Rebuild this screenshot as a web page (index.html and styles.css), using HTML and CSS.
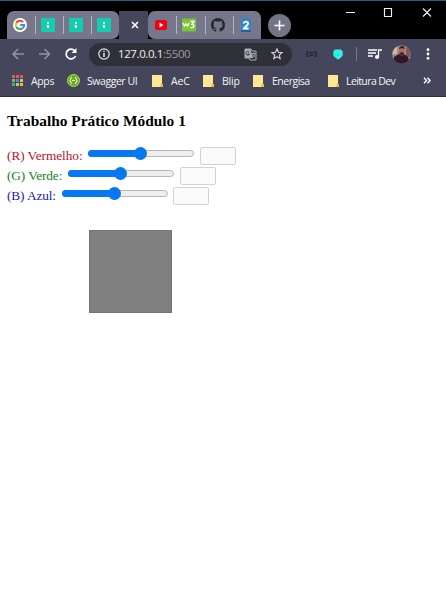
FILE: index.html
```
<!DOCTYPE html>
<html lang="pt-BR">
<head>
<meta charset="utf-8">
<title>Trabalho Prático Módulo 1</title>
<link rel="stylesheet" href="styles.css">
</head>
<body>
<header class="tabstrip">
  <div class="group first">
    <div class="tab"><svg width="14" height="14" viewBox="0 0 14 14"><circle cx="7" cy="7" r="7" fill="#fff"/><g fill="none" stroke-width="2"><path d="M3.3 5A4.2 4.2 0 0 1 10.1 4.1" stroke="#ea4335"/><path d="M3.3 5A4.2 4.2 0 0 0 3.3 9" stroke="#fbbc05"/><path d="M3.3 9A4.2 4.2 0 0 0 9.8 10.1" stroke="#34a853"/><path d="M9.8 10.1A4.2 4.2 0 0 0 11.2 7H7.2" stroke="#4285f4"/></g></svg></div>
    <div class="tab sep"><svg width="14" height="14" viewBox="0 0 14 14"><path fill="#12cdb0" d="M0 0h14v14H0z"/><path fill="#fff" d="M6 4h2v2H6zM5.5 7H8v3H6V8h-.5z"/></svg></div>
    <div class="tab sep"><svg width="14" height="14" viewBox="0 0 14 14"><path fill="#12cdb0" d="M0 0h14v14H0z"/><path fill="#fff" d="M6 4h2v2H6zM5.5 7H8v3H6V8h-.5z"/></svg></div>
    <div class="tab sep"><svg width="14" height="14" viewBox="0 0 14 14"><path fill="#12cdb0" d="M0 0h14v14H0z"/><path fill="#fff" d="M6 4h2v2H6zM5.5 7H8v3H6V8h-.5z"/></svg></div>
  </div>
  <div class="active"><svg width="8" height="8" viewBox="0 0 8 8"><path d="M1 1l6 6M7 1L1 7" stroke="#fff" stroke-width="1.6"/></svg></div>
  <div class="group second">
    <div class="tab"><svg width="14" height="14" viewBox="0 0 14 14"><rect x="1" y="2" width="12" height="10" rx="2.5" fill="#f00012"/><path d="M5.5 4.6v4.8L9.5 7z" fill="#fff"/></svg></div>
    <div class="tab sep"><svg width="14" height="14" viewBox="0 0 14 14"><rect y=".5" width="14" height="13" rx="1" fill="#77c834"/><path d="M1 5l1.5 3L4 6l1.500 2L7 5M8.500 3.500h3.500L10 6.300c3 0 2.500 4-1.500 3.200" fill="none" stroke="#fff" stroke-width="1.400"/></svg></div>
    <div class="tab sep"><svg width="14" height="14" viewBox="0 0 16 16"><path fill="#25292f" d="M8 0C3.580 0 0 3.580 0 8c0 3.540 2.290 6.530 5.470 7.590.4.070.55-.17.55-.38 0-.19-.01-.82-.01-1.490-2.010.37-2.530-.49-2.690-.94-.09-.23-.48-.94-.82-1.130-.28-.15-.68-.52-.01-.53.63-.01 1.080.58 1.230.82.72 1.210 1.870.87 2.330.66.07-.52.28-.87.51-1.070-1.780-.2-3.640-.89-3.640-3.950 0-.87.31-1.590.82-2.150-.08-.2-.36-1.020.08-2.120 0 0 .67-.21 2.200.82a7.600 7.600 0 0 1 4 0c1.530-1.040 2.200-.82 2.200-.82.44 1.100.16 1.920.08 2.120.51.56.82 1.270.82 2.150 0 3.070-1.870 3.750-3.650 3.950.29.25.54.73.54 1.480 0 1.070-.01 1.930-.01 2.200 0 .21.15.46.55.38A8 8 0 0 0 16 8c0-4.420-3.580-8-8-8z"/></svg></div>
    <div class="tab sep"><svg width="12" height="15" viewBox="0 0 12 15"><path fill="#3184cf" d="M1 0h8l2 3v11H1z"/><path d="M1 12h10v2H1z" fill="#23629e"/><path d="M3.500 5.500C4 3 8.300 3.200 8.100 5.600 8 7.500 5 8.500 4 10.500h4.600" fill="none" stroke="#fff" stroke-width="1.800"/></svg></div>
  </div>
  <div class="plus"><svg width="11" height="11" viewBox="0 0 11 11"><path d="M5.500.5v10M.5 5.500h10" stroke="#fff" stroke-width="1.600"/></svg></div>
  <svg class="window" width="88" height="12" viewBox="0 0 88 12"><path d="M1 6.500h9M39.500 2.500h7v8h-7zM78 2.500l8 8m0-8l-8 8" fill="none" stroke="#eee" stroke-width="1.150"/></svg>
</header>

<nav class="toolbar">
  <svg class="nav" width="68" height="14" viewBox="0 0 68 14" fill="none"><path d="M13 7H2M7 2L2 7l5 5M28 7h10.500M33.500 2l5 5-5 5" stroke="#94949f" stroke-width="1.500"/><path d="M63.600 3.600A4.900 4.900 0 1 0 64.500 9" stroke="#fff" stroke-width="1.700"/><path d="M65.500 1v5h-5z" fill="#fff"/></svg>
  <div class="address">
    <svg width="12" height="12" viewBox="0 0 12 12"><circle cx="6" cy="6" r="5.200" fill="none" stroke="#e6e6e8" stroke-width="1.200"/><path d="M6 5v4M6 2.700v1.400" stroke="#eee" stroke-width="1.400"/></svg>
    <span class="url">127.0.0.1<span class="port">:5500</span></span>
    <svg class="translate" width="13" height="13" viewBox="0 0 13 13"><path d="M1 1h6l1 2h4v9H6l-1-2H1z" fill="none" stroke="#a9aab0" stroke-width="1"/><path d="M1 1h5.500L9 10H1z" fill="#a9aab0"/><path d="M5 4.200a1.700 1.700 0 1 0 .4 1.800H4" fill="none" stroke="#35353e"/><path d="M7.800 5.500h3.700M9.700 4.500v1M11 5.500c-.3 1.700-1.500 2.900-2.500 3.700M8.500 6.500l2.500 3" fill="none" stroke="#c2c2c7" stroke-width=".8"/></svg>
    <svg width="12" height="12" viewBox="0 0 12 12"><path d="M6 .9l1.450 3.350 3.650.35-2.750 2.450.8 3.600L6 8.750l-3.150 1.900.8-3.600L.9 4.600l3.650-.35z" fill="none" stroke="#d3d3d7" stroke-width="1.150"/></svg>
  </div>
  <span class="braces">{≡}</span>
  <svg class="drop" width="10" height="11" viewBox="0 0 10 11"><path d="M2 .5h6l1.700 2v4L7.500 9 5 10.800 3 9 .3 7V2.500z" fill="#2ff0e3"/><path d="M4 6h2" stroke="#24b8bd"/></svg>
  <span class="divider"></span>
  <svg class="media" width="14" height="12" viewBox="0 0 14 12"><path d="M0 2h9M0 5h8M0 8h5M10.500 9.500V2H14" fill="none" stroke="#fff" stroke-width="1.300"/><circle cx="9" cy="9" r="2" fill="#fff"/></svg>
  <svg class="avatar" width="19" height="19" viewBox="0 0 19 19"><defs><clipPath id="round"><circle cx="9.500" cy="9.500" r="9.300"/></clipPath></defs><g clip-path="url(#round)"><path fill="#a98982" d="M0 0h19v19H0z"/><path fill="#d0b5a8" d="M0 0h5v9H0z"/><path fill="#805b56" d="M14 3h5v9h-5z"/><path fill="#31182a" d="M1 19l1-7 5-3h5l4 3 2 7z"/><ellipse cx="9.700" cy="6.500" rx="2.700" ry="4" fill="#a36e59"/><path fill="#38212a" d="M7 4q0-3 3-3t2.500 3L10 3zM7.500 7.500h4.500L11 10H8.500z"/></g></svg>
  <svg class="dots" width="4" height="12" viewBox="0 0 4 12" fill="#fff"><circle cx="2" cy="1.700" r="1.400"/><circle cx="2" cy="6" r="1.400"/><circle cx="2" cy="10.300" r="1.400"/></svg>
</nav>

<nav class="bookmarks">
  <svg class="apps" width="11" height="11" viewBox="0 0 11 11"><path fill="#ef554c" d="M0 0h3v3H0zM4 0h3v3H4zM8 0h3v3H8z"/><path fill="#63c375" d="M0 4h3v3H0z"/><path fill="#2794ff" d="M4 4h3v3H4z"/><path fill="#e4bc50" d="M8 4h3v3H8zM4 8h3v3H4zM8 8h3v3H8z"/><path fill="#42b36b" d="M0 8h3v3H0z"/></svg>
  <span class="b1">Apps</span>
  <svg class="swagger" width="13" height="13" viewBox="0 0 13 13"><circle cx="6.500" cy="6.500" r="6" fill="#6cad18" stroke="#aedb70"/><path d="M5 3.500q-1.500 0-1.300 1.500 0 1.500-1 1.500 1 0 1 1.500-.2 1.500 1.300 1.500M8 3.500q1.500 0 1.300 1.500 0 1.500 1 1.500-1 0-1 1.500.2 1.500-1.300 1.500M5 6.500h3" stroke="#fff" stroke-width=".9" fill="none"/></svg>
  <span class="b2">Swagger UI</span>
  <svg class="folder" width="11" height="12" viewBox="0 0 11 12"><path fill="#ffe894" d="M0 0h10v12H0z"/><path fill="#e8bd48" d="M9 8l2 1v3H8z"/></svg>
  <span class="b3">AeC</span>
  <svg class="folder" width="11" height="12" viewBox="0 0 11 12"><path fill="#ffe894" d="M0 0h10v12H0z"/><path fill="#e8bd48" d="M9 8l2 1v3H8z"/></svg>
  <span class="b4">Blip</span>
  <svg class="folder" width="11" height="12" viewBox="0 0 11 12"><path fill="#ffe894" d="M0 0h10v12H0z"/><path fill="#e8bd48" d="M9 8l2 1v3H8z"/></svg>
  <span class="b5">Energisa</span>
  <svg class="folder" width="11" height="12" viewBox="0 0 11 12"><path fill="#ffe894" d="M0 0h10v12H0z"/><path fill="#e8bd48" d="M9 8l2 1v3H8z"/></svg>
  <span class="b6">Leitura Dev</span>
  <svg class="more" width="8" height="7" viewBox="0 0 8 7"><path d="M1 .8l2.500 2.700L1 6.200M4.500.8L7 3.500 4.500 6.200" fill="none" stroke="#fff" stroke-width="1.400"/></svg>
</nav>

<main>
  <h1>Trabalho Prático Módulo 1</h1>
  <div class="row red"><span class="label">(R) Vermelho:</span><div class="slider"><div class="fill"></div><div class="thumb"></div></div><div class="value"></div></div>
  <div class="row green"><span class="label">(G) Verde:</span><div class="slider"><div class="fill"></div><div class="thumb"></div></div><div class="value"></div></div>
  <div class="row blue"><span class="label">(B) Azul:</span><div class="slider"><div class="fill"></div><div class="thumb"></div></div><div class="value"></div></div>
  <div class="swatch"></div>
</main>
</body>
</html>
```
FILE: styles.css
```
* { box-sizing: border-box; }
body { margin: 0; width: 446px; height: 602px; overflow: hidden; background: #fff; font-family: "Open Sans", sans-serif; }
svg { display: block; flex: none; }
.tabstrip { height: 39px; background: #000; border-top: 1px solid #286087; padding: 10px 0 0 7px; display: flex; align-items: flex-start; }
.group { height: 28px; background: #77778b; display: flex; }
.first { width: 112px; border-radius: 7px 7px 7px 0; }
.second { width: 113px; border-radius: 7px 7px 0 7px; }
.tab { flex: 1; min-width: 0; border-radius: 7px 7px 0 0; display: flex; align-items: center; justify-content: center; position: relative; }
.first .tab { padding-right: 2px; }
.second .tab { padding-right: 2px; }
.sep::before { content: ""; position: absolute; left: 0; top: 5px; width: 1px; height: 18px; background: #b5b5c1; }
.active { width: 29px; height: 28px; background: #45455b; display: flex; align-items: center; justify-content: center; padding-left: 3px; }
.plus { width: 23px; height: 23px; border-radius: 50%; background: #747487; margin: 3px 0 0 7px; display: flex; align-items: center; justify-content: center; }
.window { margin: -5px 0 0 54px; }
.toolbar { height: 30px; background: #45455b; padding-left: 11px; display: flex; align-items: center; }
.address { width: 203px; height: 23px; margin-left: 10px; border-radius: 12px; background: #303039; padding: 0 9px; display: flex; align-items: center; color: #f1f1f2; }
.url { margin-left: 8px; width: 127px; font-size: 11.5px; line-height: 20px; letter-spacing: -.4px; white-space: nowrap; }
.port { color: #9c9ca3; }
.translate { margin-right: 14px; }
.braces { width: 12px; margin-left: 13px; font: bold 6.5px "DejaVu Sans", sans-serif; letter-spacing: -.8px; color: #20202c; }
.drop { margin-left: 16px; }
.divider { width: 1px; height: 14px; margin-left: 13px; background: #77788b; }
.media { margin-left: 11px; }
.avatar { margin-left: 10px; }
.dots { margin-left: 15px; }
.bookmarks { height: 28px; background: #45455b; border-bottom: 1px solid #2f2f3f; padding: 0 0 4px 12px; display: flex; align-items: center; color: #f5f5f7; font-size: 10.5px; line-height: 16px; white-space: nowrap; }
.b1 { width: 28px; margin-left: 8px; letter-spacing: -.35px; }
.swagger { margin-left: 8px; }
.b2 { width: 53px; margin-left: 7px; letter-spacing: -.45px; }
.folder { margin-left: 12px; }
.b3 { width: 20px; margin-left: 8px; letter-spacing: -.2px; }
.b4 { width: 19px; margin-left: 8px; letter-spacing: -.2px; }
.b5 { width: 44px; margin-left: 8px; letter-spacing: -.5px; }
.b6 { width: 51px; margin-left: 7px; letter-spacing: -.6px; }
.more { margin-left: auto; margin-right: 15px; }
main { padding: 15px 0 0 7px; font-family: "Liberation Serif", serif; }
h1 { margin: 0 0 18px; font-size: 15.4px; line-height: 18px; font-weight: bold; color: #000; white-space: nowrap; }
.row { height: 20px; display: flex; align-items: flex-start; font-size: 13.3px; line-height: 15px; }
.label { white-space: nowrap; }
.red { color: #bd102e; }
.green { color: #16801c; }
.blue { color: #2018b4; }
.red .label { width: 81px; letter-spacing: -.05px; }
.green .label { width: 61px; letter-spacing: -.1px; }
.blue .label { width: 55px; letter-spacing: -.1px; }
.slider { position: relative; width: 106px; height: 7px; margin-top: 2px; border: 1px solid #b7b7b7; border-radius: 4px; background: #eee; }
.fill { height: 7px; width: 54px; margin: -1px; border-radius: 4px 0 0 4px; background: #0877f2; }
.thumb { position: absolute; left: 45px; top: -4px; width: 13px; height: 13px; border-radius: 50%; background: #0877f2; }
.value { width: 36px; height: 18px; margin: -1px 0 0 6px; border: 1px solid #d2d2d2; border-radius: 2px; background: #fafafa; }
.blue .value { margin-left: 5px; }
.swatch { width: 83px; height: 83px; margin: 22px 0 0 82px; background: #808080; border: 1px solid #747474; }
```
